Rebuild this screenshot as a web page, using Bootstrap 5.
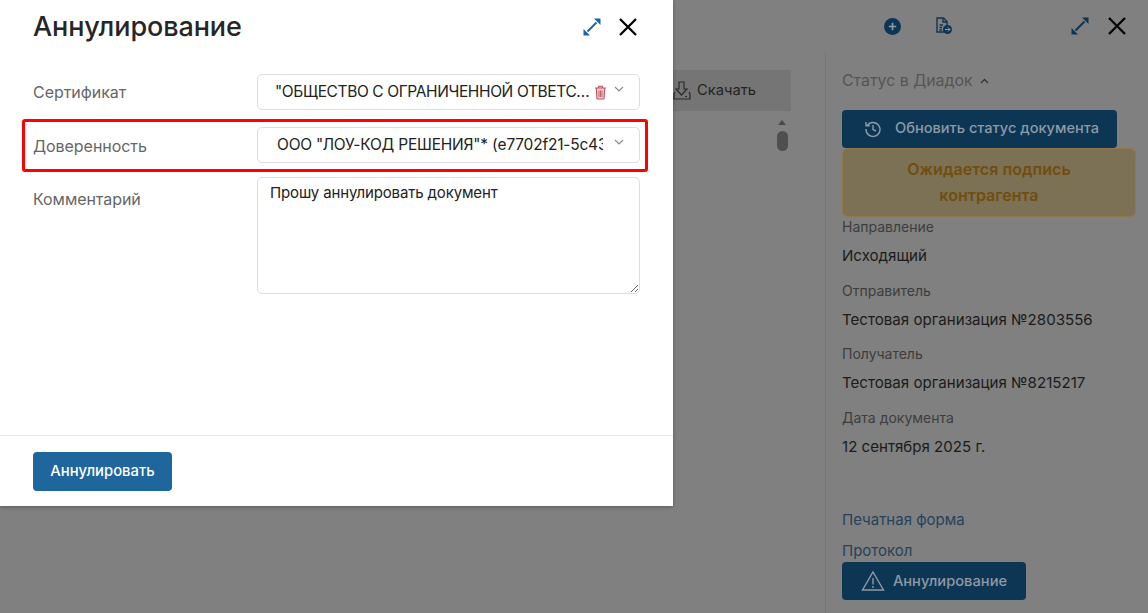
<!DOCTYPE html>
<html lang="ru">
<head>
<meta charset="utf-8">
<link href="https://cdn.jsdelivr.net/npm/bootstrap@5.3.0/dist/css/bootstrap.min.css" rel="stylesheet">
<style>
html,body{height:613px;overflow:hidden}
body{font-family:Inter,"Noto Sans",sans-serif;background:#808080;color:#1c1c1c;font-size:15px;position:relative}
.page-top{height:52px;padding-right:22px}
.top-ic-plus{margin-right:34px}
.top-ic-doc{margin-right:117px}
.top-ic-exp{margin-right:18px}
.page-main{height:561px}
.doc-area{width:825px;padding-top:18px;padding-right:34px}
.dl-bar{width:119px;height:41px;background:#757575;gap:5px;font-size:14.7px;color:#232323}
.scroll-arrow{width:0;height:0;border-left:4px solid transparent;border-right:4px solid transparent;border-bottom:5px solid #4a4a4a;margin:9px 5px 6px auto}
.scroll-thumb{width:11px;height:20px;border-radius:6px;background:#4f4f4f;margin:0 3px 0 auto}
.side-area{width:323px;border-left:1px solid #767676;padding:18px 0 0 16px}
.side-head{color:#555;font-size:15.9px;line-height:22px;gap:7px}
.side-btn{background:#0d3554;color:#8e9aa5;border:0;border-radius:4px;height:38px;font-size:14.7px;font-weight:500;gap:13px;padding:0}
.side-refresh{width:275px;margin-top:18px;padding-left:4px;font-size:14.6px}
.status-box{width:294px;height:69px;margin-top:0;padding-bottom:1px;background:#7d7155;border:1px solid #8f7a47;border-radius:6px;color:#6f4e10;font-size:16px;font-weight:600;line-height:26px;letter-spacing:.05px}
.field-cap{font-size:14px;line-height:18px;color:#3d3d3d}
.field-val{font-size:15.1px;line-height:20px;color:#1b1b1b;margin-top:10px;margin-bottom:15.7px}
.first-cap{margin-top:1px}
.print-link{color:#26425b;font-size:15px;line-height:20px;text-decoration:none;display:block}
.print-first{margin-top:53px}
.print-next{margin-top:11px}
.side-cancel{width:184px;margin-top:1px;gap:8px}
.dlg{position:absolute;left:0;top:0;width:673px;height:506px;background:#fff;box-shadow:0 1px 4px rgba(0,0,0,.3)}
.dlg-head{height:74px;padding:0 36px 20px 33px}
.dlg-title{font-size:27px;font-weight:500;line-height:54px;margin:0;color:#262626;letter-spacing:-.1px}
.dlg-exp{margin-right:17px}
.dlg-body{height:361px;padding:0 33px}
.dlg-row{height:54px;position:relative}
.dlg-label{width:225px;color:#666;font-size:16px;line-height:36px;letter-spacing:-.05px}
.dlg-field{width:383px;margin-left:-1px;height:36px;border:1px solid #dedede;border-radius:5px;padding:0 17px;font-size:15.5px;line-height:34px;color:#222;position:relative;white-space:nowrap;letter-spacing:-.38px}
.cert-text{width:318px;overflow:hidden;text-overflow:ellipsis}
.proxy-text{width:326px;overflow:hidden;margin-left:2px;letter-spacing:-.2px}
.field-chev{position:absolute;right:15px;top:11px}
.field-bin{position:absolute;right:32px;top:10px}
.row-mark{position:relative;height:54px;margin-top:-1px;margin-bottom:1px}
.row-mark .dlg-label{padding-top:1px}
.comment-line{margin-top:-1px}
.red-frame{position:absolute;left:-11px;top:-8px;width:626px;height:53px;border:3px solid #f00;border-radius:3px;pointer-events:none}
.dlg-area{width:383px;margin-left:-1px;height:117px;margin-top:-4px;border:1px solid #dedede;border-radius:5px;padding:5px 12px;font-size:15px;line-height:20px;color:#222;resize:both;outline:0;font-family:inherit;letter-spacing:-.15px;display:block}
.dlg-foot{border-top:1px solid #e9e9e9;height:71px;padding:16px 33px 0}
.dlg-submit{background:#1f669c;color:#fff;border:0;border-radius:4px;width:139px;height:39px;font-size:14.8px;font-weight:500;padding:0}
</style>
</head>
<body>
<div class="page-top d-flex justify-content-end align-items-center">
  <svg class="top-ic-plus" width="17" height="17" viewBox="0 0 16 16"><circle cx="8" cy="8" r="8" fill="#0d3554"/><path d="M8 4.500v7M4.500 8h7" stroke="#8e9aa5" stroke-width="1.600"/></svg>
  <svg class="top-ic-doc" width="18" height="18" viewBox="0 0 18 18" fill="none" stroke="#0d3554" stroke-width="1.400"><path d="M9 15H2V1h6.500L12 4.500V8"/><path d="M8 1.500V5h4M4.500 8H8M4.500 10.500H7M4.500 13H7"/><circle cx="12.500" cy="12.500" r="4.500" fill="#0d3554" stroke="none"/><path d="M10 12.500h5M13 10.500l2 2-2 2" stroke="#8e9aa5" stroke-width="1"/></svg>
  <svg class="top-ic-exp" width="20" height="20" viewBox="0 0 20 20" fill="#0d3554" stroke="#0d3554"><path d="M5.500 14.500l9-9" fill="none" stroke-width="2"/><path d="M12 1.500h6.500V8z" stroke="none"/><path d="M1.500 12v6.500H8z" stroke="none"/></svg>
  <svg width="18" height="18" viewBox="0 0 18 18" stroke="#000" stroke-width="2.300" fill="none"><path d="M1 1l16 16M17 1L1 17"/></svg>
</div>
<div class="page-main d-flex">
  <div class="doc-area">
    <div class="dl-bar ms-auto d-flex align-items-center">
      <svg width="20" height="20" viewBox="0 0 20 20" fill="none" stroke="#2a2a2a" stroke-width="1.200"><path d="M7 1h5v7h3l-5.500 6L4 8h3zM3 11l-1 2v5h16v-5l-1-2"/><path d="M13 15.500h2"/></svg>
      <span>Скачать</span>
    </div>
    <div class="scroll-arrow"></div>
    <div class="scroll-thumb"></div>
  </div>
  <div class="side-area">
    <div class="side-head d-flex align-items-center">Статус в Диадок
      <svg width="9" height="6" viewBox="0 0 9 6" fill="none" stroke="#333" stroke-width="1.300"><path d="M1 5l3.500-3.500L8 5"/></svg>
    </div>
    <button class="side-btn side-refresh d-flex align-items-center justify-content-center">
      <svg width="18" height="18" viewBox="0 0 18 18" fill="none" stroke="#8e9aa5" stroke-width="1.400"><path d="M3.200 5.500A7 7 0 1 1 2 9"/><path d="M2 2v3.800h3.800M9 5v4.500l3 1.500"/></svg>
      Обновить статус документа
    </button>
    <div class="status-box d-flex align-items-center justify-content-center text-center">Ожидается подпись<br>контрагента</div>
    <div class="field-cap first-cap">Направление</div>
    <div class="field-val">Исходящий</div>
    <div class="field-cap">Отправитель</div>
    <div class="field-val">Тестовая организация №2803556</div>
    <div class="field-cap">Получатель</div>
    <div class="field-val">Тестовая организация №8215217</div>
    <div class="field-cap">Дата документа</div>
    <div class="field-val">12 сентября 2025 г.</div>
    <a class="print-link print-first" href="#">Печатная форма</a>
    <a class="print-link print-next" href="#">Протокол</a>
    <button class="side-btn side-cancel d-flex align-items-center justify-content-center">
      <svg width="24" height="22" viewBox="0 0 24 22" fill="none" stroke="#8e9aa5" stroke-width="1.400"><path d="M12 2l10.500 18h-21z"/><path d="M12 8v6.500M12 16v2"/></svg>
      Аннулирование
    </button>
  </div>
</div>

<div class="dlg d-flex flex-column">
  <div class="dlg-head d-flex align-items-center">
    <h1 class="dlg-title me-auto">Аннулирование</h1>
    <svg class="dlg-exp" width="20" height="20" viewBox="0 0 20 20" fill="#1f669c" stroke="#1f669c"><path d="M5.500 14.500l9-9" fill="none" stroke-width="2"/><path d="M12 1.500h6.500V8z" stroke="none"/><path d="M1.500 12v6.500H8z" stroke="none"/></svg>
    <svg width="18" height="18" viewBox="0 0 18 18" stroke="#000" stroke-width="2.300" fill="none"><path d="M1 1l16 16M17 1L1 17"/></svg>
  </div>
  <div class="dlg-body">
    <div class="dlg-row d-flex">
      <div class="dlg-label">Сертификат</div>
      <div class="dlg-field">
        <div class="cert-text">"ОБЩЕСТВО С ОГРАНИЧЕННОЙ ОТВЕТСТВЕННОСТЬЮ</div>
        <svg class="field-bin" width="13" height="15" viewBox="0 0 13 15" fill="#f0cfd0" stroke="#c0555d" stroke-width="1.100"><path d="M1 3h11M4.500 3V1.200h4V3M2.300 3l.7 11h7l.7-11z"/><path d="M5 5.500v6.500M6.500 5.500v6.500M8 5.500v6.500" stroke-width=".9"/></svg>
        <svg class="field-chev" width="10" height="7" viewBox="0 0 10 7" fill="none" stroke="#888" stroke-width="1.100"><path d="M1 1l4 4 4-4"/></svg>
      </div>
    </div>
    <div class="row-mark d-flex">
      <div class="dlg-label">Доверенность</div>
      <div class="dlg-field">
        <div class="proxy-text">ООО "ЛОУ-КОД РЕШЕНИЯ"* (e7702f21-5c43-4b1e-9a0d-71c2)</div>
        <svg class="field-chev" width="10" height="7" viewBox="0 0 10 7" fill="none" stroke="#888" stroke-width="1.100"><path d="M1 1l4 4 4-4"/></svg>
      </div>
      <div class="red-frame"></div>
    </div>
    <div class="comment-line d-flex">
      <div class="dlg-label">Комментарий</div>
      <textarea class="dlg-area">Прошу аннулировать документ</textarea>
    </div>
  </div>
  <div class="dlg-foot">
    <button class="dlg-submit">Аннулировать</button>
  </div>
</div>
</body>
</html>
